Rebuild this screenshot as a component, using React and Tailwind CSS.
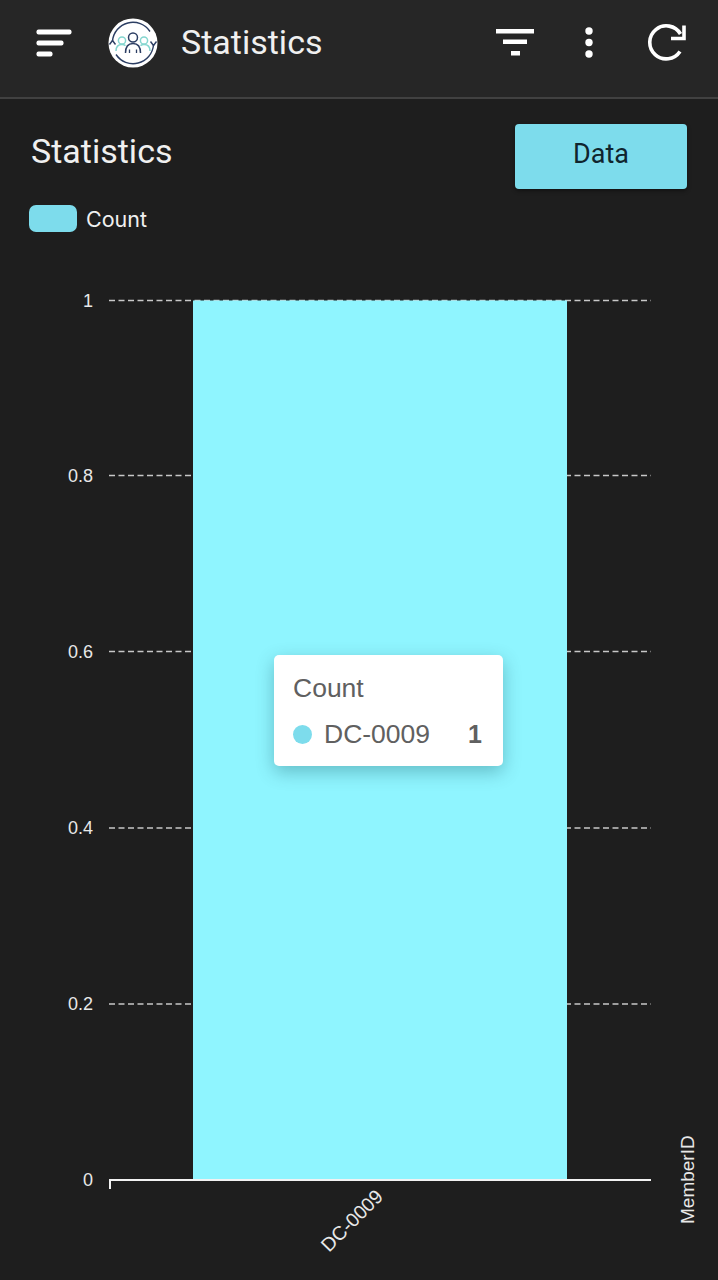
const FONT = { fontFamily: '"Liberation Sans", Arial, sans-serif' };

function Logo() {
  return (
    <svg width="54" height="50" viewBox="0 0 54 50" fill="none" className="shrink-0">
      <circle cx="27" cy="25" r="24.500" fill="#ffffff" />
      <path d="M6.5 23A20.5 20.5 0 0 1 44 13.5" stroke="#2c3e63" strokeWidth="1.4" />
      <path d="M47.5 27A20.5 20.5 0 0 1 10 36.5" stroke="#2c3e63" strokeWidth="1.4" />
      <path d="M3.500 26.500l3-4 3 4" stroke="#2c3e63" strokeWidth="1.4" />
      <path d="M44.500 23.500l3 4 3-4" stroke="#2c3e63" strokeWidth="1.4" />
      <circle cx="16" cy="22.500" r="3.600" stroke="#84d6cf" strokeWidth="1.5" />
      <path d="M10 33c0-4 2-6.500 6-6.500 1.500 0 2.500.4 3.500 1.200" stroke="#84d6cf" strokeWidth="1.5" />
      <circle cx="38" cy="22.500" r="3.600" stroke="#84d6cf" strokeWidth="1.5" />
      <path d="M44 33c0-4-2-6.500-6-6.500-1.500 0-2.500.4-3.500 1.200" stroke="#84d6cf" strokeWidth="1.5" />
      <circle cx="27" cy="19.500" r="4.500" stroke="#2c3e63" strokeWidth="1.500" />
      <path d="M19.500 35c0-6 2.500-9.500 7.500-9.500s7.500 3.500 7.500 9.500" stroke="#2c3e63" strokeWidth="1.500" />
      <path d="M23.500 35v-3.500M30.500 35v-3.500" stroke="#2c3e63" strokeWidth="1.300" />
    </svg>
  );
}

function Chart() {
  const gridRows = [
    { y: 50.5, label: "1" },
    { y: 225.5, label: "0.8" },
    { y: 401.5, label: "0.6" },
    { y: 578, label: "0.4" },
    { y: 754, label: "0.2" },
  ];
  return (
    <svg width="718" height="1030" viewBox="0 0 718 1030" className="block">
      {gridRows.map((r) => (
        <g key={r.label}>
          <line x1="109" x2="651" y1={r.y} y2={r.y} stroke="#c8c8c8" strokeWidth="1.4" strokeDasharray="6 3.500" />
          <text x="93" y={r.y + 6} textAnchor="end" fontSize="18" fill="#e8e8e8" style={FONT}>
            {r.label}
          </text>
        </g>
      ))}
      <rect x="193" y="50.500" width="374" height="879.500" fill="#8ff5ff" />
      <line x1="109" x2="651" y1="930" y2="930" stroke="#f2f2f2" strokeWidth="2" />
      <line x1="110" x2="110" y1="930" y2="939" stroke="#f2f2f2" strokeWidth="2" />
      <text x="93" y="936" textAnchor="end" fontSize="18" fill="#e8e8e8" style={FONT}>
        0
      </text>
      <text
        transform="translate(329 1003) rotate(-45)"
        fontSize="19.500"
        fill="#e8e8e8"
        style={FONT}
      >
        DC-0009
      </text>
      <text
        transform="translate(694 974) rotate(-90)"
        fontSize="19"
        fill="#e8e8e8"
        style={FONT}
      >
        MemberID
      </text>
    </svg>
  );
}

export default function App() {
  return (
    <div className="w-[718px] h-[1280px] overflow-hidden flex flex-col bg-[#1e1e1e] text-white font-['Roboto',sans-serif]">
      <header className="h-[99px] shrink-0 flex items-center bg-[#262626] border-b-2 border-[#414141] pl-[36px] pr-[31px] pb-[12px]">
        <svg width="36" height="28" viewBox="0 0 36 28" className="shrink-0">
          <rect x="0.500" y="0.500" width="35" height="5" rx="2" fill="#fff" />
          <rect x="0.500" y="11.500" width="27" height="5" rx="2" fill="#fff" />
          <rect x="0.500" y="22.500" width="16" height="5" rx="2" fill="#fff" />
        </svg>
        <div className="ml-[34px]"><Logo /></div>
        <h1 className="ml-[21px] mb-[2px] text-[34px] leading-none font-normal text-[#f0f0f0]">Statistics</h1>
        <div className="ml-auto flex items-center">
          <svg width="38" height="27" viewBox="0 0 38 27">
            <rect x="0" y="0" width="38" height="4.500" fill="#fff" />
            <rect x="7" y="10.500" width="24" height="4.500" fill="#fff" />
            <rect x="15" y="22" width="9" height="4.500" fill="#fff" />
          </svg>
          <svg width="10" height="31" viewBox="0 0 10 31" className="ml-[50px]">
            <circle cx="5" cy="4" r="3.700" fill="#fff" />
            <circle cx="5" cy="15.500" r="3.700" fill="#fff" />
            <circle cx="5" cy="27" r="3.700" fill="#fff" />
          </svg>
          <svg width="40" height="38" viewBox="0 0 40 38" fill="none" className="ml-[53px]">
            <path d="M33 27.500A16.500 16.500 0 1 1 33.500 10" stroke="#fff" strokeWidth="3.600" />
            <path d="M37 1.500V14.500H24" stroke="#fff" strokeWidth="3.600" />
          </svg>
        </div>
      </header>

      <main className="flex-1 flex flex-col relative">
        <div className="flex items-start justify-between pl-[31px] pr-[31px] pt-[25px]">
          <h2 className="mt-[7px] text-[34px] leading-[40px] font-normal text-[#f0f0f0]">Statistics</h2>
          <button className="w-[172px] h-[65px] rounded-[4px] bg-[#7ddcec] text-[#10252e] text-[27px] leading-none flex items-center justify-center pb-[4px] shadow-[0_2px_4px_rgba(0,0,0,0.4)]">
            Data
          </button>
        </div>
        <div className="flex items-center ml-[29px] mt-[16px] h-[27px]">
          <span className="w-[48px] h-[27px] rounded-[7px] bg-[#7ddcec]" />
          <span className="ml-[9px] mt-[2px] text-[21.5px] leading-none text-[#f0f0f0] font-['Inter',sans-serif]">Count</span>
        </div>
        <div className="mt-[18px]">
          <Chart />
        </div>
        <div
          className="absolute left-[274px] top-[556px] w-[229px] h-[111px] rounded-[5px] bg-white shadow-[0_6px_18px_rgba(0,60,70,0.3)] px-[19px] pt-[18px] text-[#606060]"
          style={FONT}
        >
          <div className="text-[26.500px] leading-[30px]">Count</div>
          <div className="flex items-center mt-[15px] h-[32px]">
            <span className="w-[19px] h-[19px] rounded-full bg-[#7ddcec]" />
            <span className="ml-[12px] text-[26.500px] leading-none">DC-0009</span>
            <span className="ml-auto mr-[2px] text-[25px] leading-none font-bold">1</span>
          </div>
        </div>
      </main>
    </div>
  );
}
